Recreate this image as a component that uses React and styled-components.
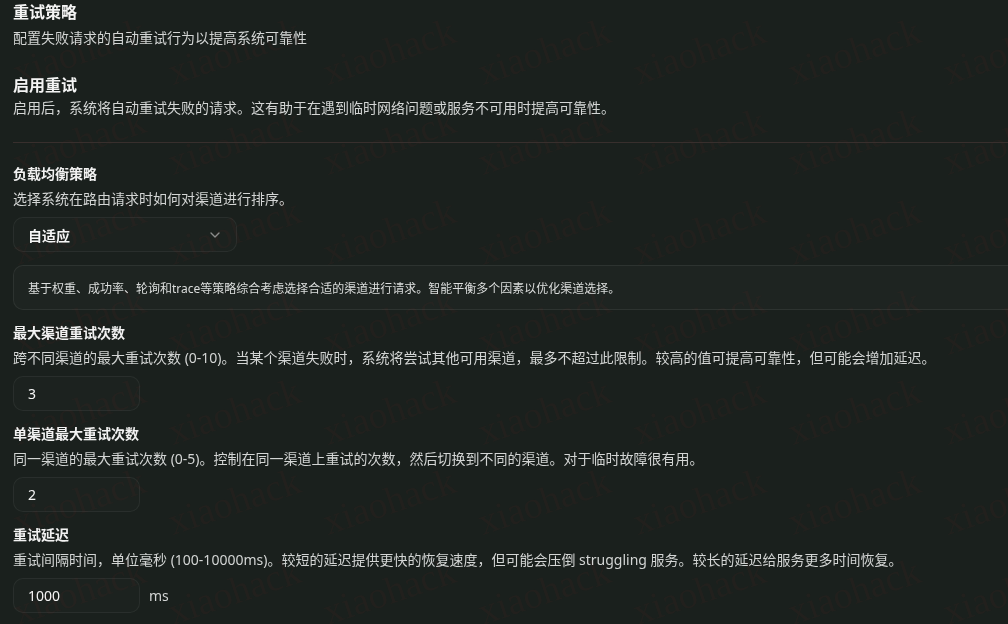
import React from "react";
import styled, { createGlobalStyle } from "styled-components";
import { ChevronDown } from "lucide-react";

const GlobalStyle = createGlobalStyle`
  html, body {
    margin: 0;
    padding: 0;
    background: #1a201d;
    overflow: hidden;
  }
  body {
    font-family: "Noto Sans", "Noto Sans CJK SC", sans-serif;
    color: #e8e8e8;
  }
`;

const fields = [
  {
    label: "最大渠道重试次数",
    desc: "跨不同渠道的最大重试次数 (0-10)。当某个渠道失败时，系统将尝试其他可用渠道，最多不超过此限制。较高的值可提高可靠性，但可能会增加延迟。",
    value: "3",
  },
  {
    label: "单渠道最大重试次数",
    desc: "同一渠道的最大重试次数 (0-5)。控制在同一渠道上重试的次数，然后切换到不同的渠道。对于临时故障很有用。",
    value: "2",
  },
  {
    label: "重试延迟",
    desc: "重试间隔时间，单位毫秒 (100-10000ms)。较短的延迟提供更快的恢复速度，但可能会压倒 struggling 服务。较长的延迟给服务更多时间恢复。",
    value: "1000",
    unit: "ms",
  },
];

const Watermark = () => {
  const marks = [];
  for (let row = -1; row < 8; row++) {
    for (let col = -1; col < 7; col++) {
      const x = 18 + col * 155;
      const y = 85 + row * 90;
      marks.push(
        <text key={`${row}-${col}`} x={x} y={y} transform={`rotate(-18.5 ${x} ${y})`}>
          xiaohack
        </text>
      );
    }
  }
  return (
    <WatermarkLayer width="1008" height="624" viewBox="0 0 1008 624" aria-hidden="true">
      <g fill="rgba(255, 70, 60, 0.035)" fontFamily="'Liberation Serif', serif" fontSize="38">
        {marks}
      </g>
    </WatermarkLayer>
  );
};

export default function App() {
  return (
    <>
      <GlobalStyle />
      <Watermark />
      <Page>
        <Title>重试策略</Title>
        <Subtitle>配置失败请求的自动重试行为以提高系统可靠性</Subtitle>

        <SectionTitle>启用重试</SectionTitle>
        <SectionDesc>启用后，系统将自动重试失败的请求。这有助于在遇到临时网络问题或服务不可用时提高可靠性。</SectionDesc>

        <Divider />

        <Field $first>
          <Label>负载均衡策略</Label>
          <Desc>选择系统在路由请求时如何对渠道进行排序。</Desc>
          <Select>
            <span>自适应</span>
            <ChevronDown size={16} strokeWidth={2} color="#8a8d8b" />
          </Select>
          <InfoBox>
            基于权重、成功率、轮询和trace等策略综合考虑选择合适的渠道进行请求。智能平衡多个因素以优化渠道选择。
          </InfoBox>
        </Field>

        {fields.map((f) => (
          <Field key={f.label}>
            <Label>{f.label}</Label>
            <Desc>{f.desc}</Desc>
            <InputRow>
              <NumberInput>{f.value}</NumberInput>
              {f.unit && <Unit>{f.unit}</Unit>}
            </InputRow>
          </Field>
        ))}
      </Page>
    </>
  );
}

const Page = styled.div`
  position: relative;
  width: 1040px;
  height: 624px;
  padding-left: 13px;
  box-sizing: border-box;
  display: flex;
  flex-direction: column;
`;

const Title = styled.h1`
  margin: 0;
  font-size: 16px;
  line-height: 24px;
  font-weight: 700;
  color: #f4f4f4;
`;

const Subtitle = styled.p`
  margin: 4px 0 0;
  font-size: 14px;
  line-height: 20px;
  color: #d3d5d4;
`;

const SectionTitle = styled.h2`
  margin: 25px 0 0;
  font-size: 16px;
  line-height: 24px;
  font-weight: 600;
  color: #f4f4f4;
`;

const SectionDesc = styled.p`
  margin: 1px 0 0;
  font-size: 14px;
  line-height: 20px;
  color: #d3d5d4;
`;

const Divider = styled.div`
  margin-top: 24px;
  height: 1px;
  background: #382f2d;
`;

const Field = styled.div`
  display: flex;
  flex-direction: column;
  align-items: flex-start;
  margin-top: ${(p) => (p.$first ? "21px" : "13px")};
`;

const Label = styled.div`
  font-size: 14px;
  line-height: 20px;
  font-weight: 600;
  color: #f2f2f2;
`;

const Desc = styled.div`
  margin-top: 5px;
  font-size: 14px;
  line-height: 20px;
  color: #d3d5d4;
  white-space: nowrap;
`;

const Select = styled.div`
  margin-top: 8px;
  width: 224px;
  height: 35px;
  box-sizing: border-box;
  padding: 0 13px 0 14px;
  display: flex;
  align-items: center;
  justify-content: space-between;
  border: 1px solid rgba(255, 255, 255, 0.06);
  border-radius: 10px;
  background: rgba(255, 255, 255, 0.012);
  font-size: 14px;
  font-weight: 600;
  color: #f6f6f6;
`;

const InfoBox = styled.div`
  margin-top: 13px;
  align-self: stretch;
  height: 45px;
  box-sizing: border-box;
  padding: 0 14px;
  display: flex;
  align-items: center;
  border: 1px solid rgba(255, 255, 255, 0.07);
  border-radius: 10px;
  background: rgba(255, 255, 255, 0.018);
  font-size: 12px;
  color: #dcdedd;
`;

const InputRow = styled.div`
  margin-top: 8px;
  display: flex;
  align-items: center;
  gap: 9px;
`;

const NumberInput = styled.div`
  width: 127px;
  height: 35px;
  box-sizing: border-box;
  padding-left: 14px;
  display: flex;
  align-items: center;
  border: 1px solid rgba(255, 255, 255, 0.06);
  border-radius: 10px;
  background: rgba(255, 255, 255, 0.012);
  font-size: 14px;
  color: #f6f6f6;
`;

const Unit = styled.span`
  font-size: 14px;
  color: #d3d5d4;
`;

const WatermarkLayer = styled.svg`
  position: fixed;
  left: 0;
  top: 0;
  pointer-events: none;
`;
